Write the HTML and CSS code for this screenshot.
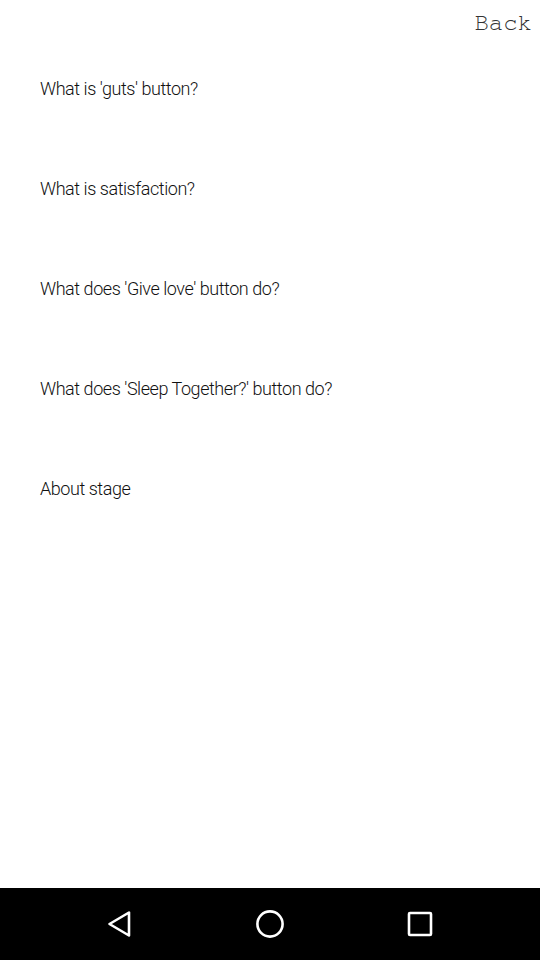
FILE: index.html
```html
<!DOCTYPE html>
<html>
<head>
<meta charset="utf-8">
<link rel="stylesheet" href="styles.css">
</head>
<body>
<div class="screen">
  <div class="content">
    <div class="header"><span class="back">Back</span></div>
    <ul class="faq">
      <li class="item">What is 'guts' button?</li>
      <li class="item">What is satisfaction?</li>
      <li class="item">What does 'Give love' button do?</li>
      <li class="item">What does 'Sleep Together?' button do?</li>
      <li class="item">About stage</li>
    </ul>
  </div>
  <div class="navbar">
    <svg class="nav-icon" width="30" height="30" viewBox="0 0 30 30"><path d="M24 3.5 L24 26.5 L4.5 15 Z" fill="none" stroke="#fff" stroke-width="2.6" stroke-linejoin="round"/></svg>
    <svg class="nav-icon" width="30" height="30" viewBox="0 0 30 30"><circle cx="15" cy="15" r="12.6" fill="none" stroke="#fff" stroke-width="2.6"/></svg>
    <svg class="nav-icon" width="30" height="30" viewBox="0 0 30 30"><rect x="4" y="4" width="22" height="22" rx="1" fill="none" stroke="#fff" stroke-width="2.6"/></svg>
  </div>
</div>
</body>
</html>
```
FILE: styles.css
```css
html, body {
  margin: 0;
  padding: 0;
  background: #fff;
}
.screen {
  width: 540px;
  height: 960px;
  display: flex;
  flex-direction: column;
}
.content {
  flex: 1;
  display: flex;
  flex-direction: column;
}
.header {
  height: 38px;
  display: flex;
  justify-content: flex-end;
  align-items: flex-start;
  padding: 10px 8px 0 0;
  box-sizing: border-box;
}
.back {
  font-family: "Nimbus Mono PS", "Nimbus Mono L", FreeMono, "Courier New", Courier, "Liberation Mono", monospace;
  font-size: 24px;
  line-height: 26px;
  color: #333;
}
.faq {
  list-style: none;
  margin: 0;
  padding: 0;
}
.item {
  height: 100px;
  display: flex;
  align-items: center;
  padding-left: 40px;
  font-family: Roboto, sans-serif;
  font-weight: 300;
  font-size: 18px;
  color: #111;
  letter-spacing: -0.45px;
}
.navbar {
  height: 72px;
  background: #000;
  display: flex;
  justify-content: space-around;
  align-items: center;
  padding: 0 45px;
}
.nav-icon {
  display: block;
}
```
